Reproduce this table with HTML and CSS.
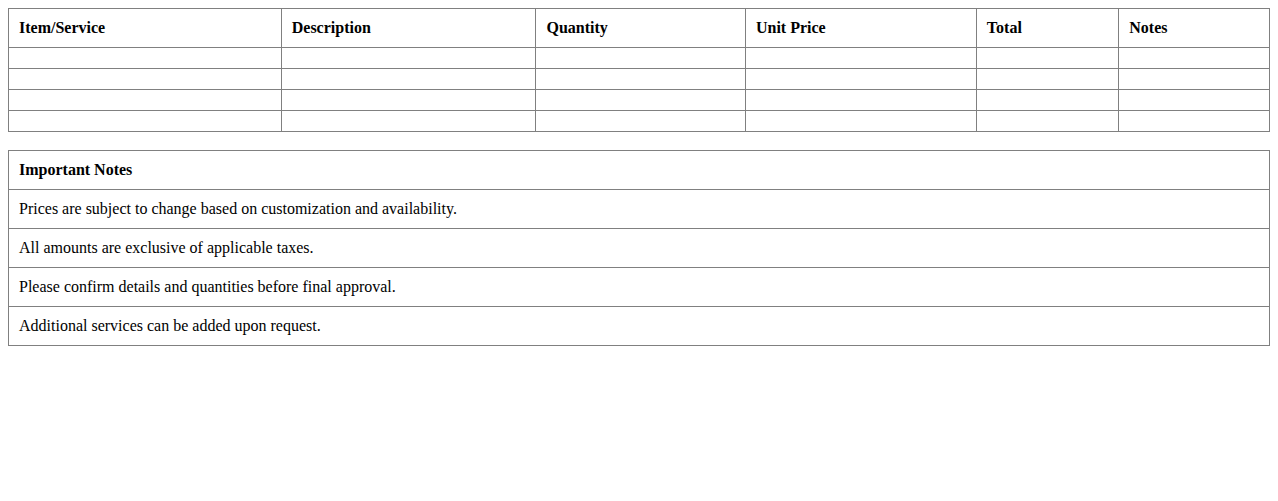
FILE: index.html
```html
<!DOCTYPE html>
<html>
<head>
<meta charset="utf-8">
<link rel="stylesheet" href="styles.css">
</head>
<body>
<table class="items">
  <thead>
    <tr>
      <th>Item/Service</th>
      <th>Description</th>
      <th>Quantity</th>
      <th>Unit Price</th>
      <th>Total</th>
      <th>Notes</th>
    </tr>
  </thead>
  <tbody>
    <tr><td></td><td></td><td></td><td></td><td></td><td></td></tr>
    <tr><td></td><td></td><td></td><td></td><td></td><td></td></tr>
    <tr><td></td><td></td><td></td><td></td><td></td><td></td></tr>
    <tr><td></td><td></td><td></td><td></td><td></td><td></td></tr>
  </tbody>
</table>
<table class="notes">
  <thead>
    <tr><th>Important Notes</th></tr>
  </thead>
  <tbody>
    <tr><td>Prices are subject to change based on customization and availability.</td></tr>
    <tr><td>All amounts are exclusive of applicable taxes.</td></tr>
    <tr><td>Please confirm details and quantities before final approval.</td></tr>
    <tr><td>Additional services can be added upon request.</td></tr>
  </tbody>
</table>
</body>
</html>
```

FILE: styles.css
```css
body {
  margin: 8px;
  font-family: "Liberation Serif", "Times New Roman", serif;
  font-size: 16px;
  color: #000;
  background: #fff;
}
table {
  width: 100%;
  border-collapse: collapse;
}
th, td {
  border: 1px solid #808080;
  padding: 10px;
  text-align: left;
}
th {
  font-weight: bold;
}
.notes {
  margin-top: 18px;
}
```
